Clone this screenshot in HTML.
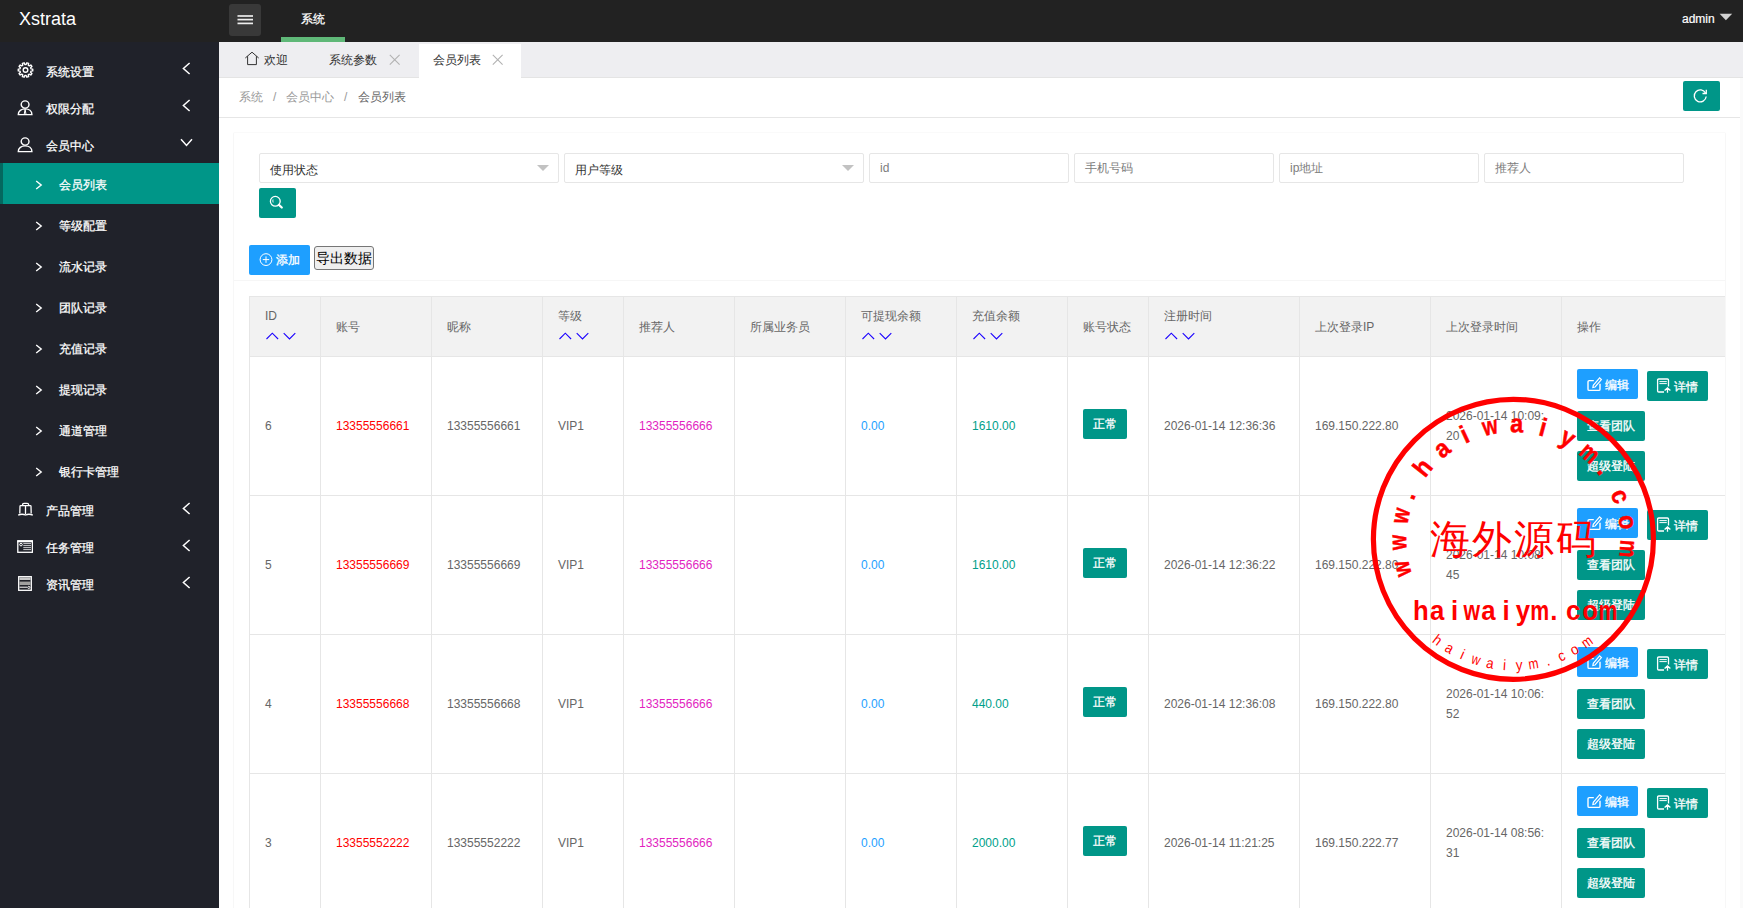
<!DOCTYPE html>
<html><head><meta charset="utf-8">
<style>
*{margin:0;padding:0;box-sizing:border-box}
html,body{width:1743px;height:908px;overflow:hidden;background:#fff;font-family:"Liberation Sans",sans-serif;font-size:12px;color:#666}
.a{position:absolute}
#hdr{left:0;top:0;width:1743px;height:42px;background:#222}
#logo{left:19px;top:8px;font-size:18px;color:#fff;line-height:22px}
#burger{left:229px;top:4px;width:32px;height:32px;background:#393939;border-radius:3px}
#burger i{position:absolute;left:8.5px;width:15.5px;height:1.6px;background:#eee}
#hnav{left:301px;top:11px;color:#fff;font-size:12px;line-height:16px;-webkit-text-stroke:0.25px #fff}
#hbar{left:281px;top:37px;width:64px;height:5px;background:#5FB878}
#admin{left:1682px;top:11px;color:#fff;font-size:12px;line-height:16px;-webkit-text-stroke:0.2px #fff}
#side{left:0;top:42px;width:219px;height:866px;background:#20222A}
.mi{position:absolute;left:0;width:219px;color:#fff;font-size:12px;line-height:16px;-webkit-text-stroke:0.25px #fff}
.mi .t{position:absolute;left:46px;top:0}
.mi .ar{position:absolute;left:182px;top:0}
.si .t{left:59px}
#tabs{left:219px;top:42px;width:1524px;height:36px;background:#eeeef1;border-bottom:1px solid #e4e4e4}
.tab{position:absolute;top:0;font-size:12px;color:#333;line-height:16px}
#crumb{left:219px;top:78px;width:1521px;height:40px;border-bottom:1px solid #e6e6e6;background:#fff}
#rstrip{left:1740px;top:78px;width:3px;height:830px;background:#fafafa}
#card{left:233px;top:132px;width:1493px;height:800px;border:1px solid #f7f7f7;border-top-color:#fafafa;border-radius:2px;background:#fff}
.inp{position:absolute;top:153px;height:30px;border:1px solid #e6e6e6;border-radius:2px;background:#fff;font-size:12px;line-height:16px}
.btn{position:absolute;height:30px;border-radius:2px;color:#fff;font-size:12px;line-height:30px;white-space:nowrap;-webkit-text-stroke:0.3px #fff}
.g{background:#009688}
.b{background:#1E9FFF}
#tbl{left:249px;top:296px;width:1476px;height:612px;overflow:hidden}
.hl{position:absolute;left:0;width:1476px;height:1px;background:#e6e6e6}
.vl{position:absolute;top:0;width:1px;height:612px;background:#e6e6e6}
.c{position:absolute;font-size:12px;line-height:16px;white-space:nowrap;color:#666}
</style></head><body>
<div id="hdr" class="a"></div>
<div id="logo" class="a">Xstrata</div>
<div id="burger" class="a"></div><svg class="a" style="left:229px;top:4px" width="32" height="32" viewBox="0 0 32 32"><g stroke="#eee" stroke-width="1.7"><path d="M8.5 12 H24"/><path d="M8.5 15.6 H24"/><path d="M8.5 19.4 H24"/></g><g stroke="#222" stroke-width="1.7"><path d="M10.3 12 V12.1"/></g></svg>
<div id="hnav" class="a">系统</div>
<div id="hbar" class="a"></div>
<div id="admin" class="a">admin</div>

<div id="side" class="a"></div>
<svg class="a" style="left:17px;top:62px" width="17" height="17" viewBox="0 0 17 17"><g fill="none" stroke="#fff" stroke-width="1.4" stroke-linejoin="round"><path d="M13.99 6.88 L15.74 7.09 L15.74 8.91 L13.99 9.12 L13.60 10.32 L14.90 11.52 L13.82 13.00 L12.28 12.13 L11.26 12.87 L11.61 14.61 L9.87 15.17 L9.13 13.56 L7.87 13.56 L7.13 15.17 L5.39 14.61 L5.74 12.87 L4.72 12.13 L3.18 13.00 L2.10 11.52 L3.40 10.32 L3.01 9.12 L1.26 8.91 L1.26 7.09 L3.01 6.88 L3.40 5.68 L2.10 4.48 L3.18 3.00 L4.72 3.87 L5.74 3.13 L5.39 1.39 L7.13 0.83 L7.87 2.44 L9.13 2.44 L9.87 0.83 L11.61 1.39 L11.26 3.13 L12.28 3.87 L13.82 3.00 L14.90 4.48 L13.60 5.68Z"/><circle cx="8.5" cy="8.0" r="2.3"/></g></svg>
<div class="mi" style="top:64px"><span class="t">系统设置</span></div><svg class="a" style="left:182px;top:62px" width="9" height="13" viewBox="0 0 9 13"><path d="M7.6 1 L1.4 6.5 L7.6 12" fill="none" stroke="#fff" stroke-width="1.5"/></svg>
<svg class="a" style="left:17px;top:100px" width="17" height="16" viewBox="0 0 17 16"><g fill="none" stroke="#fff" stroke-width="1.4">
<ellipse cx="8.1" cy="4.5" rx="3.9" ry="3.6"/><path d="M1.3 14.6C1.3 10.9 4.4 8.9 8.1 8.9S14.9 10.9 14.9 14.6Z"/><path d="M8.1 9.2 L7.2 14.4 M8.1 9.2 L9 14.4" stroke-width="1"/></g></svg>
<div class="mi" style="top:101px"><span class="t">权限分配</span></div><svg class="a" style="left:182px;top:99px" width="9" height="13" viewBox="0 0 9 13"><path d="M7.6 1 L1.4 6.5 L7.6 12" fill="none" stroke="#fff" stroke-width="1.5"/></svg>
<svg class="a" style="left:17px;top:137px" width="17" height="16" viewBox="0 0 17 16"><g fill="none" stroke="#fff" stroke-width="1.4">
<ellipse cx="8.1" cy="4.5" rx="3.9" ry="3.6"/><path d="M1.3 14.6C1.3 10.9 4.4 8.9 8.1 8.9S14.9 10.9 14.9 14.6Z"/></g></svg>
<div class="mi" style="top:138px"><span class="t">会员中心</span></div><svg class="a" style="left:180px;top:138px" width="13" height="9" viewBox="0 0 13 9"><path d="M1 1.2 L6.5 7.4 L12 1.2" fill="none" stroke="#fff" stroke-width="1.5"/></svg>
<div class="a" style="left:0;top:163px;width:219px;height:41px;background:#009688"></div><div class="a" style="left:0;top:163px;width:3px;height:41px;background:#04685f"></div>
<div class="mi si" style="top:177px"><span class="t">会员列表</span></div><svg class="a" style="left:35px;top:180px" width="8" height="10" viewBox="0 0 8 10"><path d="M1.2 1 L6.2 5 L1.2 9" fill="none" stroke="#fff" stroke-width="1.4"/></svg>
<div class="mi si" style="top:218px"><span class="t">等级配置</span></div><svg class="a" style="left:35px;top:221px" width="8" height="10" viewBox="0 0 8 10"><path d="M1.2 1 L6.2 5 L1.2 9" fill="none" stroke="#fff" stroke-width="1.4"/></svg>
<div class="mi si" style="top:259px"><span class="t">流水记录</span></div><svg class="a" style="left:35px;top:262px" width="8" height="10" viewBox="0 0 8 10"><path d="M1.2 1 L6.2 5 L1.2 9" fill="none" stroke="#fff" stroke-width="1.4"/></svg>
<div class="mi si" style="top:300px"><span class="t">团队记录</span></div><svg class="a" style="left:35px;top:303px" width="8" height="10" viewBox="0 0 8 10"><path d="M1.2 1 L6.2 5 L1.2 9" fill="none" stroke="#fff" stroke-width="1.4"/></svg>
<div class="mi si" style="top:341px"><span class="t">充值记录</span></div><svg class="a" style="left:35px;top:344px" width="8" height="10" viewBox="0 0 8 10"><path d="M1.2 1 L6.2 5 L1.2 9" fill="none" stroke="#fff" stroke-width="1.4"/></svg>
<div class="mi si" style="top:382px"><span class="t">提现记录</span></div><svg class="a" style="left:35px;top:385px" width="8" height="10" viewBox="0 0 8 10"><path d="M1.2 1 L6.2 5 L1.2 9" fill="none" stroke="#fff" stroke-width="1.4"/></svg>
<div class="mi si" style="top:423px"><span class="t">通道管理</span></div><svg class="a" style="left:35px;top:426px" width="8" height="10" viewBox="0 0 8 10"><path d="M1.2 1 L6.2 5 L1.2 9" fill="none" stroke="#fff" stroke-width="1.4"/></svg>
<div class="mi si" style="top:464px"><span class="t">银行卡管理</span></div><svg class="a" style="left:35px;top:467px" width="8" height="10" viewBox="0 0 8 10"><path d="M1.2 1 L6.2 5 L1.2 9" fill="none" stroke="#fff" stroke-width="1.4"/></svg>
<svg class="a" style="left:17px;top:502px" width="17" height="15" viewBox="0 0 17 15"><g fill="none" stroke="#fff" stroke-width="1.3">
<path d="M5.6 3.6 V2.6 Q5.6 1.3 7 1.3 H10.2 Q11.6 1.3 11.6 2.6 V3.6"/><path d="M2.8 11.4 L3 4.3 Q3 3.6 3.7 3.6 H13.3 Q14 3.6 14 4.3 L14.2 11.4"/><path d="M8.5 3.6 V12.2"/><path d="M1.2 13.2 Q4.8 11.4 8.5 13 Q12.2 11.4 15.8 13.2"/></g></svg>
<div class="mi" style="top:503px"><span class="t">产品管理</span></div><svg class="a" style="left:182px;top:502px" width="9" height="13" viewBox="0 0 9 13"><path d="M7.6 1 L1.4 6.5 L7.6 12" fill="none" stroke="#fff" stroke-width="1.5"/></svg>
<svg class="a" style="left:17px;top:540px" width="16" height="13" viewBox="0 0 16 13"><rect x="0.8" y="0.9" width="14.6" height="11.4" fill="none" stroke="#fff" stroke-width="1.3"/><rect x="0.3" y="0.3" width="15.6" height="2" fill="#fff"/><circle cx="4" cy="4.6" r="1.3" fill="none" stroke="#fff" stroke-width="1"/><g stroke="#fff" stroke-width="0.9" opacity="0.85"><path d="M6.3 3.6 H14 M6.3 5.6 H14 M6.3 7.6 H14 M6.3 9.6 H14"/></g></svg>
<div class="mi" style="top:540px"><span class="t">任务管理</span></div><svg class="a" style="left:182px;top:539px" width="9" height="13" viewBox="0 0 9 13"><path d="M7.6 1 L1.4 6.5 L7.6 12" fill="none" stroke="#fff" stroke-width="1.5"/></svg>
<svg class="a" style="left:18px;top:576px" width="14" height="15" viewBox="0 0 14 15"><rect x="0.7" y="0.7" width="12.6" height="13.6" fill="none" stroke="#fff" stroke-width="1.3"/><rect x="1.4" y="1.4" width="11.2" height="2.6" fill="#c8c8c8"/><rect x="1.4" y="5.6" width="11.2" height="3.4" fill="#a0a0a0"/><path d="M1.5 11.2 H9" stroke="#fff" stroke-width="1"/><circle cx="10.8" cy="11.4" r="1.1" fill="none" stroke="#fff" stroke-width="0.9"/></svg>
<div class="mi" style="top:577px"><span class="t">资讯管理</span></div><svg class="a" style="left:182px;top:576px" width="9" height="13" viewBox="0 0 9 13"><path d="M7.6 1 L1.4 6.5 L7.6 12" fill="none" stroke="#fff" stroke-width="1.5"/></svg>

<div id="tabs" class="a"></div>
<div id="crumb" class="a"></div>
<div id="rstrip" class="a"></div>
<div id="card" class="a"></div>
<svg class="a" style="left:1719px;top:13px" width="14" height="8" viewBox="0 0 14 8"><path d="M0.6 0.8 H13.2 L6.9 7.2z" fill="#d2d2d2"/></svg>
<div class="a" style="left:419px;top:44px;width:102px;height:34px;background:#fff"></div>
<svg class="a" style="left:244px;top:51px" width="16" height="15" viewBox="0 0 16 15"><path d="M1.3 7 L8 1.2 L14.7 7 M3.6 5.2 V13.6 H12.4 V5.2" fill="none" stroke="#333" stroke-width="1"/></svg>
<div class="tab a" style="left:264px;top:52px">欢迎</div>
<div class="tab a" style="left:329px;top:52px">系统参数</div>
<svg class="a" style="left:389px;top:54px" width="12" height="12" viewBox="0 0 12 12"><path d="M0.8 0.8 L10.6 10.6 M10.6 0.8 L0.8 10.6" stroke="#b2b2b2" stroke-width="1.1"/></svg>
<div class="tab a" style="left:433px;top:52px">会员列表</div>
<svg class="a" style="left:492px;top:54px" width="12" height="12" viewBox="0 0 12 12"><path d="M0.8 0.8 L10.6 10.6 M10.6 0.8 L0.8 10.6" stroke="#b2b2b2" stroke-width="1.1"/></svg>
<div class="a c" style="left:239px;top:89px;color:#999">系统</div><div class="a c" style="left:273px;top:89px;color:#999">/</div><div class="a c" style="left:286px;top:89px;color:#999">会员中心</div><div class="a c" style="left:344px;top:89px;color:#999">/</div><div class="a c" style="left:358px;top:89px;color:#666">会员列表</div>
<div class="btn g" style="left:1683px;top:81px;width:37px"></div>
<svg class="a" style="left:1692px;top:87px" width="17" height="17" viewBox="0 0 17 17"><path d="M13.6 6.2 A6 6 0 1 0 14.2 9.5" fill="none" stroke="#fff" stroke-width="1.3"/><path d="M10.5 6.5 H14.3 V2.7" fill="none" stroke="#fff" stroke-width="1.3"/></svg>

<div class="inp" style="left:259px;width:300px"></div><div class="a c" style="left:270px;top:162px;color:#333">使用状态</div><svg class="a" style="left:537px;top:165px" width="12" height="6" viewBox="0 0 12 6"><path d="M0 0 H12 L6 6z" fill="#c2c2c2"/></svg>
<div class="inp" style="left:564px;width:300px"></div><div class="a c" style="left:575px;top:162px;color:#333">用户等级</div><svg class="a" style="left:842px;top:165px" width="12" height="6" viewBox="0 0 12 6"><path d="M0 0 H12 L6 6z" fill="#c2c2c2"/></svg>
<div class="inp" style="left:869px;width:200px"></div><div class="a c" style="left:880px;top:160px;color:#7d7d7d">id</div>
<div class="inp" style="left:1074px;width:200px"></div><div class="a c" style="left:1085px;top:160px;color:#7d7d7d">手机号码</div>
<div class="inp" style="left:1279px;width:200px"></div><div class="a c" style="left:1290px;top:160px;color:#7d7d7d">ip地址</div>
<div class="inp" style="left:1484px;width:200px"></div><div class="a c" style="left:1495px;top:160px;color:#7d7d7d">推荐人</div>
<div class="btn g" style="left:259px;top:188px;width:37px"></div>
<svg class="a" style="left:268px;top:194px" width="17" height="17" viewBox="0 0 17 17"><circle cx="7.3" cy="7.3" r="4.9" fill="none" stroke="#fff" stroke-width="1.3"/><path d="M10.9 10.9 L13.8 13.5" stroke="#fff" stroke-width="2.2" stroke-linecap="round"/><path d="M5 5.5 Q4.5 7 5.2 8.5" fill="none" stroke="#fff" stroke-width="0.9"/></svg>
<div class="btn b" style="left:249px;top:245px;width:61px"></div>
<svg class="a" style="left:259px;top:253px" width="14" height="14" viewBox="0 0 14 14"><circle cx="7" cy="6.6" r="5.9" fill="none" stroke="#fff" stroke-width="1"/><path d="M7 3.4 V9.8 M3.8 6.6 H10.2" stroke="#fff" stroke-width="1"/></svg>
<div class="a c" style="left:276px;top:252px;color:#fff;-webkit-text-stroke:0.3px #fff">添加</div>
<div class="a" style="left:314px;top:246px;width:60px;height:24px;background:#efefef;border:1px solid #767676;border-radius:3px"></div>
<div class="a" style="left:316px;top:250px;font-size:14px;line-height:16px;color:#000">导出数据</div>
<div class="a" style="left:234px;top:280px;width:1491px;height:1px;background:#f6f6f6"></div>
<div id="tbl" class="a">
<div class="a" style="left:0;top:0;width:1476px;height:60px;background:#f2f2f2"></div>
<div class="hl" style="top:0px"></div>
<div class="hl" style="top:60px"></div>
<div class="hl" style="top:199px"></div>
<div class="hl" style="top:338px"></div>
<div class="hl" style="top:477px"></div>
<div class="hl" style="top:616px"></div>
<div class="vl" style="left:0px"></div>
<div class="vl" style="left:71px"></div>
<div class="vl" style="left:182px"></div>
<div class="vl" style="left:293px"></div>
<div class="vl" style="left:374px"></div>
<div class="vl" style="left:485px"></div>
<div class="vl" style="left:596px"></div>
<div class="vl" style="left:707px"></div>
<div class="vl" style="left:818px"></div>
<div class="vl" style="left:899px"></div>
<div class="vl" style="left:1050px"></div>
<div class="vl" style="left:1181px"></div>
<div class="vl" style="left:1312px"></div>
</div>
<div class="a c" style="left:265px;top:308px">ID</div>
<svg class="a" style="left:265px;top:332px" width="32" height="8" viewBox="0 0 32 8"><path d="M1.5 7 L7.3 1.2 L13.1 7 M18.7 1.2 L24.5 7 L30.3 1.2" fill="none" stroke="#1a00ff" stroke-width="1.1"/></svg>
<div class="a c" style="left:336px;top:319px">账号</div>
<div class="a c" style="left:447px;top:319px">昵称</div>
<div class="a c" style="left:558px;top:308px">等级</div>
<svg class="a" style="left:558px;top:332px" width="32" height="8" viewBox="0 0 32 8"><path d="M1.5 7 L7.3 1.2 L13.1 7 M18.7 1.2 L24.5 7 L30.3 1.2" fill="none" stroke="#1a00ff" stroke-width="1.1"/></svg>
<div class="a c" style="left:639px;top:319px">推荐人</div>
<div class="a c" style="left:750px;top:319px">所属业务员</div>
<div class="a c" style="left:861px;top:308px">可提现余额</div>
<svg class="a" style="left:861px;top:332px" width="32" height="8" viewBox="0 0 32 8"><path d="M1.5 7 L7.3 1.2 L13.1 7 M18.7 1.2 L24.5 7 L30.3 1.2" fill="none" stroke="#1a00ff" stroke-width="1.1"/></svg>
<div class="a c" style="left:972px;top:308px">充值余额</div>
<svg class="a" style="left:972px;top:332px" width="32" height="8" viewBox="0 0 32 8"><path d="M1.5 7 L7.3 1.2 L13.1 7 M18.7 1.2 L24.5 7 L30.3 1.2" fill="none" stroke="#1a00ff" stroke-width="1.1"/></svg>
<div class="a c" style="left:1083px;top:319px">账号状态</div>
<div class="a c" style="left:1164px;top:308px">注册时间</div>
<svg class="a" style="left:1164px;top:332px" width="32" height="8" viewBox="0 0 32 8"><path d="M1.5 7 L7.3 1.2 L13.1 7 M18.7 1.2 L24.5 7 L30.3 1.2" fill="none" stroke="#1a00ff" stroke-width="1.1"/></svg>
<div class="a c" style="left:1315px;top:319px">上次登录IP</div>
<div class="a c" style="left:1446px;top:319px">上次登录时间</div>
<div class="a c" style="left:1577px;top:319px">操作</div>
<div class="a c" style="left:265px;top:418px">6</div>
<div class="a c" style="left:336px;top:418px;color:#f00">13355556661</div>
<div class="a c" style="left:447px;top:418px">13355556661</div>
<div class="a c" style="left:558px;top:418px">VIP1</div>
<div class="a c" style="left:639px;top:418px;color:#e21fbf">13355556666</div>
<div class="a c" style="left:861px;top:418px;color:#1E9FFF">0.00</div>
<div class="a c" style="left:972px;top:418px;color:#009f8a">1610.00</div>
<div class="btn g" style="left:1083px;top:409px;width:44px;text-align:center">正常</div>
<div class="a c" style="left:1164px;top:418px">2026-01-14 12:36:36</div>
<div class="a c" style="left:1315px;top:418px">169.150.222.80</div>
<div class="a c" style="left:1446px;top:406px;line-height:20px">2026-01-14 10:09:<br>20</div>
<div class="btn b" style="left:1577px;top:369px;width:61px"><svg class="a" style="left:9px;top:8px" width="17" height="16" viewBox="0 0 17 16"><path d="M7.8 3.6 H3.2 Q2 3.6 2 4.8 V12.2 Q2 13.4 3.2 13.4 H12.8 Q14 13.4 14 12.2 V6.8" fill="none" stroke="#fff" stroke-width="1.4"/><path d="M6.9 10.4 L7.3 8.3 L13.6 0.9 L15.4 2.6 L9.1 10 Z" fill="none" stroke="#fff" stroke-width="1.2"/></svg><span class="a" style="left:28px;top:1px">编辑</span></div>
<div class="btn g" style="left:1647px;top:371px;width:61px"><svg class="a" style="left:9px;top:7px" width="17" height="17" viewBox="0 0 17 17"><path d="M8 14 H2.7 Q1.6 14 1.6 12.9 V2.1 Q1.6 1 2.7 1 H11.4 Q12.5 1 12.5 2.1 V8.6" fill="none" stroke="#fff" stroke-width="1.3"/><path d="M3.4 3.6 H10.8 M3.4 5.6 H10.8" stroke="#fff" stroke-width="1"/><path d="M11.5 14.8 V10.6 M8.6 12.6 L11.5 9.9 L14.4 12.6" fill="none" stroke="#fff" stroke-width="1.3"/></svg><span class="a" style="left:27px;top:1px">详情</span></div>
<div class="btn g" style="left:1577px;top:411px;width:68px;text-align:center">查看团队</div>
<div class="btn g" style="left:1577px;top:451px;width:68px;text-align:center">超级登陆</div>
<div class="a c" style="left:265px;top:557px">5</div>
<div class="a c" style="left:336px;top:557px;color:#f00">13355556669</div>
<div class="a c" style="left:447px;top:557px">13355556669</div>
<div class="a c" style="left:558px;top:557px">VIP1</div>
<div class="a c" style="left:639px;top:557px;color:#e21fbf">13355556666</div>
<div class="a c" style="left:861px;top:557px;color:#1E9FFF">0.00</div>
<div class="a c" style="left:972px;top:557px;color:#009f8a">1610.00</div>
<div class="btn g" style="left:1083px;top:548px;width:44px;text-align:center">正常</div>
<div class="a c" style="left:1164px;top:557px">2026-01-14 12:36:22</div>
<div class="a c" style="left:1315px;top:557px">169.150.222.80</div>
<div class="a c" style="left:1446px;top:545px;line-height:20px">2026-01-14 10:08:<br>45</div>
<div class="btn b" style="left:1577px;top:508px;width:61px"><svg class="a" style="left:9px;top:8px" width="17" height="16" viewBox="0 0 17 16"><path d="M7.8 3.6 H3.2 Q2 3.6 2 4.8 V12.2 Q2 13.4 3.2 13.4 H12.8 Q14 13.4 14 12.2 V6.8" fill="none" stroke="#fff" stroke-width="1.4"/><path d="M6.9 10.4 L7.3 8.3 L13.6 0.9 L15.4 2.6 L9.1 10 Z" fill="none" stroke="#fff" stroke-width="1.2"/></svg><span class="a" style="left:28px;top:1px">编辑</span></div>
<div class="btn g" style="left:1647px;top:510px;width:61px"><svg class="a" style="left:9px;top:7px" width="17" height="17" viewBox="0 0 17 17"><path d="M8 14 H2.7 Q1.6 14 1.6 12.9 V2.1 Q1.6 1 2.7 1 H11.4 Q12.5 1 12.5 2.1 V8.6" fill="none" stroke="#fff" stroke-width="1.3"/><path d="M3.4 3.6 H10.8 M3.4 5.6 H10.8" stroke="#fff" stroke-width="1"/><path d="M11.5 14.8 V10.6 M8.6 12.6 L11.5 9.9 L14.4 12.6" fill="none" stroke="#fff" stroke-width="1.3"/></svg><span class="a" style="left:27px;top:1px">详情</span></div>
<div class="btn g" style="left:1577px;top:550px;width:68px;text-align:center">查看团队</div>
<div class="btn g" style="left:1577px;top:590px;width:68px;text-align:center">超级登陆</div>
<div class="a c" style="left:265px;top:696px">4</div>
<div class="a c" style="left:336px;top:696px;color:#f00">13355556668</div>
<div class="a c" style="left:447px;top:696px">13355556668</div>
<div class="a c" style="left:558px;top:696px">VIP1</div>
<div class="a c" style="left:639px;top:696px;color:#e21fbf">13355556666</div>
<div class="a c" style="left:861px;top:696px;color:#1E9FFF">0.00</div>
<div class="a c" style="left:972px;top:696px;color:#009f8a">440.00</div>
<div class="btn g" style="left:1083px;top:687px;width:44px;text-align:center">正常</div>
<div class="a c" style="left:1164px;top:696px">2026-01-14 12:36:08</div>
<div class="a c" style="left:1315px;top:696px">169.150.222.80</div>
<div class="a c" style="left:1446px;top:684px;line-height:20px">2026-01-14 10:06:<br>52</div>
<div class="btn b" style="left:1577px;top:647px;width:61px"><svg class="a" style="left:9px;top:8px" width="17" height="16" viewBox="0 0 17 16"><path d="M7.8 3.6 H3.2 Q2 3.6 2 4.8 V12.2 Q2 13.4 3.2 13.4 H12.8 Q14 13.4 14 12.2 V6.8" fill="none" stroke="#fff" stroke-width="1.4"/><path d="M6.9 10.4 L7.3 8.3 L13.6 0.9 L15.4 2.6 L9.1 10 Z" fill="none" stroke="#fff" stroke-width="1.2"/></svg><span class="a" style="left:28px;top:1px">编辑</span></div>
<div class="btn g" style="left:1647px;top:649px;width:61px"><svg class="a" style="left:9px;top:7px" width="17" height="17" viewBox="0 0 17 17"><path d="M8 14 H2.7 Q1.6 14 1.6 12.9 V2.1 Q1.6 1 2.7 1 H11.4 Q12.5 1 12.5 2.1 V8.6" fill="none" stroke="#fff" stroke-width="1.3"/><path d="M3.4 3.6 H10.8 M3.4 5.6 H10.8" stroke="#fff" stroke-width="1"/><path d="M11.5 14.8 V10.6 M8.6 12.6 L11.5 9.9 L14.4 12.6" fill="none" stroke="#fff" stroke-width="1.3"/></svg><span class="a" style="left:27px;top:1px">详情</span></div>
<div class="btn g" style="left:1577px;top:689px;width:68px;text-align:center">查看团队</div>
<div class="btn g" style="left:1577px;top:729px;width:68px;text-align:center">超级登陆</div>
<div class="a c" style="left:265px;top:835px">3</div>
<div class="a c" style="left:336px;top:835px;color:#f00">13355552222</div>
<div class="a c" style="left:447px;top:835px">13355552222</div>
<div class="a c" style="left:558px;top:835px">VIP1</div>
<div class="a c" style="left:639px;top:835px;color:#e21fbf">13355556666</div>
<div class="a c" style="left:861px;top:835px;color:#1E9FFF">0.00</div>
<div class="a c" style="left:972px;top:835px;color:#009f8a">2000.00</div>
<div class="btn g" style="left:1083px;top:826px;width:44px;text-align:center">正常</div>
<div class="a c" style="left:1164px;top:835px">2026-01-14 11:21:25</div>
<div class="a c" style="left:1315px;top:835px">169.150.222.77</div>
<div class="a c" style="left:1446px;top:823px;line-height:20px">2026-01-14 08:56:<br>31</div>
<div class="btn b" style="left:1577px;top:786px;width:61px"><svg class="a" style="left:9px;top:8px" width="17" height="16" viewBox="0 0 17 16"><path d="M7.8 3.6 H3.2 Q2 3.6 2 4.8 V12.2 Q2 13.4 3.2 13.4 H12.8 Q14 13.4 14 12.2 V6.8" fill="none" stroke="#fff" stroke-width="1.4"/><path d="M6.9 10.4 L7.3 8.3 L13.6 0.9 L15.4 2.6 L9.1 10 Z" fill="none" stroke="#fff" stroke-width="1.2"/></svg><span class="a" style="left:28px;top:1px">编辑</span></div>
<div class="btn g" style="left:1647px;top:788px;width:61px"><svg class="a" style="left:9px;top:7px" width="17" height="17" viewBox="0 0 17 17"><path d="M8 14 H2.7 Q1.6 14 1.6 12.9 V2.1 Q1.6 1 2.7 1 H11.4 Q12.5 1 12.5 2.1 V8.6" fill="none" stroke="#fff" stroke-width="1.3"/><path d="M3.4 3.6 H10.8 M3.4 5.6 H10.8" stroke="#fff" stroke-width="1"/><path d="M11.5 14.8 V10.6 M8.6 12.6 L11.5 9.9 L14.4 12.6" fill="none" stroke="#fff" stroke-width="1.3"/></svg><span class="a" style="left:27px;top:1px">详情</span></div>
<div class="btn g" style="left:1577px;top:828px;width:68px;text-align:center">查看团队</div>
<div class="btn g" style="left:1577px;top:868px;width:68px;text-align:center">超级登陆</div>
<!--STAMP-->
<svg class="a" style="left:0;top:0;pointer-events:none" width="1743" height="908" viewBox="0 0 1743 908">
<circle cx="1513.4" cy="539.3" r="140" fill="none" stroke="#f00" stroke-width="5.2"/>
<g fill="#f00" stroke="#f00" stroke-width="0.5" font-family="Liberation Sans" font-weight="bold" font-size="25.5" text-anchor="middle">
<text transform="translate(1409.9,566.6) rotate(255.2) scale(0.76,1)">w</text>
<text transform="translate(1406.4,542.1) rotate(268.5) scale(0.76,1)">w</text>
<text transform="translate(1408.7,517.4) rotate(281.8) scale(0.76,1)">w</text>
<text transform="translate(1414.7,498.0) rotate(292.7) scale(0.92,1)">.</text>
<text transform="translate(1429.5,472.8) rotate(308.4) scale(0.92,1)">h</text>
<text transform="translate(1447.1,455.3) rotate(321.7) scale(0.92,1)">a</text>
<text transform="translate(1468.2,442.3) rotate(335.0) scale(0.92,1)">i</text>
<text transform="translate(1491.7,434.5) rotate(348.3) scale(0.76,1)">w</text>
<text transform="translate(1516.4,432.3) rotate(361.6) scale(0.92,1)">a</text>
<text transform="translate(1540.9,435.9) rotate(374.9) scale(0.92,1)">i</text>
<text transform="translate(1564.0,445.0) rotate(388.2) scale(0.92,1)">y</text>
<text transform="translate(1584.3,459.2) rotate(401.5) scale(0.76,1)">m</text>
<text transform="translate(1598.2,474.0) rotate(412.4) scale(0.92,1)">.</text>
<text transform="translate(1612.7,499.4) rotate(428.1) scale(0.92,1)">c</text>
<text transform="translate(1619.2,523.3) rotate(441.4) scale(0.92,1)">o</text>
<text transform="translate(1620.0,548.1) rotate(454.7) scale(0.76,1)">m</text>
</g>
<g fill="#f00" font-family="Liberation Sans" font-size="15" text-anchor="middle">
<text transform="translate(1434.6,643.9) rotate(37.0) scale(0.9,1)">h</text>
<text transform="translate(1447.1,652.3) rotate(30.4) scale(0.9,1)">a</text>
<text transform="translate(1460.5,659.2) rotate(23.8) scale(0.9,1)">i</text>
<text transform="translate(1474.7,664.4) rotate(17.2) scale(0.8,1)">w</text>
<text transform="translate(1489.3,668.1) rotate(10.6) scale(0.9,1)">a</text>
<text transform="translate(1504.3,670.0) rotate(4.0) scale(0.9,1)">i</text>
<text transform="translate(1519.3,670.2) rotate(-2.6) scale(0.9,1)">y</text>
<text transform="translate(1534.3,668.6) rotate(-9.2) scale(0.8,1)">m</text>
<text transform="translate(1549.1,665.4) rotate(-15.8) scale(0.9,1)">.</text>
<text transform="translate(1563.3,660.4) rotate(-22.4) scale(0.9,1)">c</text>
<text transform="translate(1576.9,653.9) rotate(-29.0) scale(0.9,1)">o</text>
<text transform="translate(1589.7,645.8) rotate(-35.6) scale(0.8,1)">m</text>
</g>
<text x="1514" y="553" fill="#f00" font-family="Liberation Serif" font-weight="500" font-size="40" text-anchor="middle" letter-spacing="2">海外源码</text>
<g fill="#f00" font-family="Liberation Sans" font-weight="bold" font-size="28" text-anchor="middle">
<text transform="translate(1420.8,619.7) scale(0.92,1)">h</text>
<text transform="translate(1437.2,619.7) scale(0.92,1)">a</text>
<text transform="translate(1454.5,619.7) scale(0.92,1)">i</text>
<text transform="translate(1471.9,619.7) scale(0.76,1)">w</text>
<text transform="translate(1488.3,619.7) scale(0.92,1)">a</text>
<text transform="translate(1506.2,619.7) scale(0.92,1)">i</text>
<text transform="translate(1523,619.7) scale(0.92,1)">y</text>
<text transform="translate(1539.7,619.7) scale(0.76,1)">m</text>
<text transform="translate(1553.9,619.7) scale(0.92,1)">.</text>
<text transform="translate(1573.2,619.7) scale(0.92,1)">c</text>
<text transform="translate(1590.2,619.7) scale(0.92,1)">o</text>
<text transform="translate(1607.9,619.7) scale(0.76,1)">m</text>
</g>
</svg>
<!--/STAMP-->
</body></html>
